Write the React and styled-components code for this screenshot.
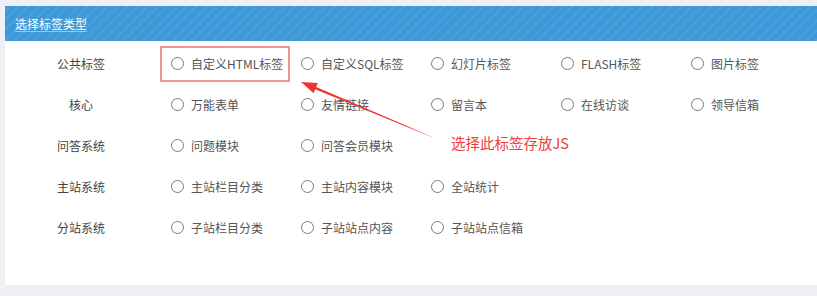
import React from "react";
import styled, { createGlobalStyle } from "styled-components";

const GlobalStyle = createGlobalStyle`
  html, body { margin: 0; padding: 0; background: #eef0f4; }
  body { font-family: "Noto Sans CJK SC", "Noto Sans", sans-serif; }
  * { box-sizing: border-box; }
`;

const Page = styled.div`
  position: relative;
  width: 817px;
  height: 296px;
  padding: 6px 0 0 5px;
  overflow: hidden;
`;

const Panel = styled.section`
  background: #fff;
  width: 812px;
`;

const Header = styled.div`
  height: 35px;
  display: flex;
  align-items: center;
  padding-left: 10px;
  background-color: #3e98d7;
  background-image: repeating-linear-gradient(
    -45deg,
    rgba(255, 255, 255, 0.07) 0px,
    rgba(255, 255, 255, 0.07) 2px,
    rgba(255, 255, 255, 0) 2px,
    rgba(255, 255, 255, 0) 7px
  );
`;

const Title = styled.span`
  color: #fff;
  font-size: 12px;
  line-height: 14px;
  text-decoration: underline;
  text-decoration-color: rgba(255, 255, 255, 0.45);
  text-underline-offset: 2px;
`;

const Body = styled.div`
  padding: 2px 0 37px;
`;

const Row = styled.div`
  display: grid;
  grid-template-columns: 155px repeat(5, 130px);
  height: 41px;
  align-items: center;
`;

const Label = styled.div`
  text-align: center;
  padding-right: 3px;
  font-size: 12px;
  line-height: 14px;
  color: #444;
`;

const Option = styled.label`
  display: flex;
  align-items: center;
  gap: 7px;
  height: 36px;
  padding-left: 9px;
  border: 2px solid ${(p) => (p.$marked ? "#f29494" : "transparent")};
  font-size: 12px;
  line-height: 14px;
  color: #555;
  white-space: nowrap;
`;

const Radio = styled.span`
  width: 13px;
  height: 13px;
  border-radius: 50%;
  border: 1px solid #7a7a7a;
  background: #fff;
  flex: none;
`;

const Overlay = styled.svg`
  position: absolute;
  left: 0;
  top: 0;
  pointer-events: none;
`;

const Note = styled.span`
  position: absolute;
  left: 451px;
  top: 135px;
  font-size: 14.5px;
  line-height: 16px;
  color: #f23c3c;
  white-space: nowrap;
`;

const rows = [
  { label: "公共标签", items: ["自定义HTML标签", "自定义SQL标签", "幻灯片标签", "FLASH标签", "图片标签"] },
  { label: "核心", items: ["万能表单", "友情链接", "留言本", "在线访谈", "领导信箱"] },
  { label: "问答系统", items: ["问题模块", "问答会员模块"] },
  { label: "主站系统", items: ["主站栏目分类", "主站内容模块", "全站统计"] },
  { label: "分站系统", items: ["子站栏目分类", "子站站点内容", "子站站点信箱"] },
];

function Arrow() {
  const tip = [301, 82];
  const tail = [432, 137];
  const dx = tail[0] - tip[0];
  const dy = tail[1] - tip[1];
  const len = Math.hypot(dx, dy);
  const u = [dx / len, dy / len];
  const n = [-u[1], u[0]];
  const headLen = 16;
  const headW = 5.5;
  const base = [tip[0] + u[0] * headLen, tip[1] + u[1] * headLen];
  const p = (pt) => `${pt[0].toFixed(2)},${pt[1].toFixed(2)}`;
  const add = (a, v, s) => [a[0] + v[0] * s, a[1] + v[1] * s];
  const head = [tip, add(base, n, headW), add(base, n, -headW)];
  const neck = add(tip, u, headLen - 2);
  const shaft = [add(neck, n, 1.3), add(tail, n, 0.4), add(tail, n, -0.4), add(neck, n, -1.3)];
  return (
    <Overlay width="817" height="296" viewBox="0 0 817 296">
      <defs>
        <linearGradient id="fade" gradientUnits="userSpaceOnUse" x1={tip[0]} y1={tip[1]} x2={tail[0]} y2={tail[1]}>
          <stop offset="0" stopColor="#f23232" />
          <stop offset="0.8" stopColor="#f23232" />
          <stop offset="1" stopColor="#f23232" stopOpacity="0.35" />
        </linearGradient>
      </defs>
      <polygon points={shaft.map(p).join(" ")} fill="url(#fade)" />
      <polygon points={head.map(p).join(" ")} fill="#f23232" />
    </Overlay>
  );
}

export default function App() {
  return (
    <>
      <GlobalStyle />
      <Page>
        <Panel>
          <Header>
            <Title>选择标签类型</Title>
          </Header>
          <Body>
            {rows.map((r, ri) => (
              <Row key={r.label}>
                <Label>{r.label}</Label>
                {r.items.map((it, i) => (
                  <Option key={it} $marked={ri === 0 && i === 0}>
                    <Radio />
                    {it}
                  </Option>
                ))}
              </Row>
            ))}
          </Body>
        </Panel>
        <Arrow />
        <Note>选择此标签存放JS</Note>
      </Page>
    </>
  );
}
